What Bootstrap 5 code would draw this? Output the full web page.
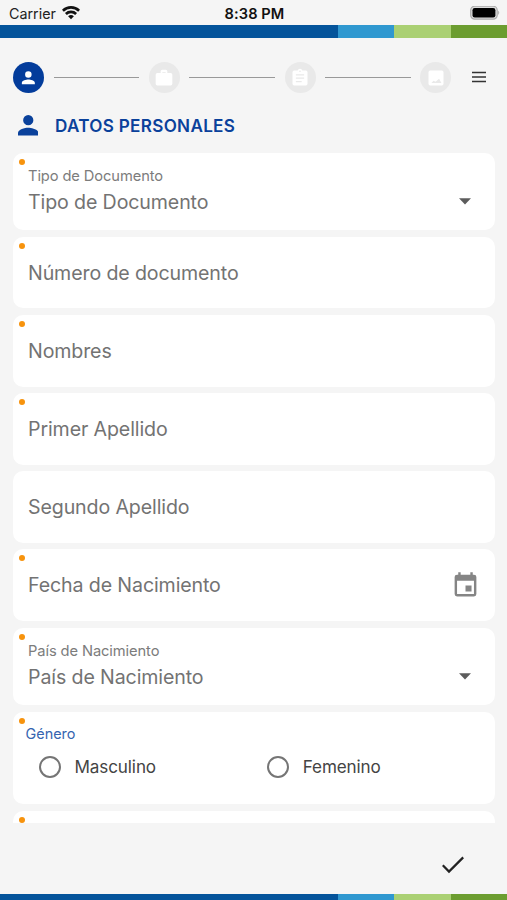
<!DOCTYPE html>
<html lang="es">
<head>
<meta charset="utf-8">
<meta name="viewport" content="width=device-width, initial-scale=1">
<title>Datos personales</title>
<link href="https://cdn.jsdelivr.net/npm/bootstrap@5.3.0/dist/css/bootstrap.min.css" rel="stylesheet">
<style>
body{font-family:Inter,"Liberation Sans",sans-serif;background:#f5f5f5;height:900px;line-height:1.2;color:#444}
svg{display:block;flex:none}
.status{height:25px;color:#222;font-size:14.3px;padding:3px 7px 0 9px}
.status>div{flex:1 1 0}
.status .clock{font-weight:600;font-size:14.6px;color:#111;letter-spacing:.1px;padding-top:1px}
.wifi{margin:0 0 2px 6px}
.stripe{height:13px;flex:none}
.stripe.low{height:6px}
.stripe i{width:56.3px}
.stripe i:first-child{width:auto;flex:1}
.s1{background:#04549b}.s2{background:#2f98d0}.s3{background:#aad073}.s4{background:#6c9d30}
.steps{padding:24px 19px 0 13px}
.step{width:31px;height:31px;background:#e9e9e9;color:#fff;flex:none}
.step.on{background:#033c9b}
.rail{height:1px;background:#999;flex:1;margin:0 9.5px}
.burger{margin:0 0 1px 18.5px}
.heading{color:#0a419b;padding:5px 17.5px 0;height:59.5px}
.heading h1{font-size:17.1px;font-weight:600;margin:1px 0 0 17px;letter-spacing:.31px}
.fields{padding:0 12.5px 0 13px;gap:6.5px;height:670.5px;overflow:hidden}
.field{background:#fff;border-radius:10px;height:71.7px;flex:none;padding:1.6px 15px 0;color:#737373;font-size:19.6px;letter-spacing:-.12px}
.field.tall{height:77.7px;padding-top:0;padding-bottom:2px}
.field.group{height:92.5px;padding:13px 12.5px}
.field small{font-size:14.7px;display:block;line-height:18px;color:#7c7c7c;letter-spacing:-.1px}
.field .val{line-height:24px;margin-top:5px}
.req::before{content:"";position:absolute;left:6.3px;top:6px;width:6px;height:6px;border-radius:50%;background:#f7930d}
.calendar{margin-bottom:2px}
.legend-label{color:#3564b0;font-size:14.4px;line-height:17px;letter-spacing:0}
.choices{margin-top:14px}
.choice{font-size:17.1px;color:#444;width:228.5px;letter-spacing:-.12px}
.ring{width:22px;height:22px;border:2.3px solid #757575;border-radius:50%;margin:0 14px 0 13px}
.actions{padding:12px 42px 0 0}
</style>
<script src="https://cdn.jsdelivr.net/npm/bootstrap@5.3.0/dist/js/bootstrap.bundle.min.js"></script>
</head>
<body class="d-flex flex-column overflow-hidden">
<header class="status d-flex align-items-center flex-shrink-0">
  <div class="d-flex align-items-center"><span>Carrier</span>
    <svg class="wifi" width="18" height="14" viewBox="0 0 18 14" fill="none" stroke="#111" stroke-width="2.7"><path d="M.9 4.700a11.600 11.600 0 0 1 16.200 0M3.900 8a7.300 7.300 0 0 1 10.200 0"/><path d="M9 13.200 6.100 10.300a4.200 4.200 0 0 1 5.800 0z" fill="#111" stroke="none"/></svg>
  </div>
  <span class="clock">8:38 PM</span>
  <div class="d-flex justify-content-end"><svg width="30" height="16" viewBox="0 1 30 16"><rect x=".7" y=".7" width="26.500" height="13" rx="4" fill="#ddd" stroke="#aaa" stroke-width="1.200" transform="translate(0 .5)"/><rect x="2.500" y="3" width="22.900" height="9.400" rx="2.200"/><path d="M28.200 5.500q2 2.200 0 4.400z" fill="#aaa"/></svg></div>
</header>
<div class="stripe d-flex"><i class="s1"></i><i class="s2"></i><i class="s3"></i><i class="s4"></i></div>
<nav class="steps d-flex align-items-center flex-shrink-0">
  <span class="step on rounded-circle d-flex align-items-center justify-content-center"><svg width="19.500" height="19.500" viewBox="0.500 0 24 24" fill="currentColor"><path d="M12 12a4 4 0 1 0 0-8 4 4 0 0 0 0 8zm0 2c-2.670 0-8 1.340-8 4v2h16v-2c0-2.660-5.330-4-8-4z"/></svg></span>
  <span class="rail"></span>
  <span class="step rounded-circle d-flex align-items-center justify-content-center"><svg width="20" height="20" viewBox="0 0 24 24" fill="currentColor"><path d="M20 6h-4V4a2 2 0 0 0-2-2h-4a2 2 0 0 0-2 2v2H4a2 2 0 0 0-2 2v11a2 2 0 0 0 2 2h16a2 2 0 0 0 2-2V8a2 2 0 0 0-2-2zm-6 0h-4V5h4z"/></svg></span>
  <span class="rail"></span>
  <span class="step rounded-circle d-flex align-items-center justify-content-center"><svg width="20" height="20" viewBox="0 0 24 24" fill="currentColor"><path d="M19 3h-4.180a3 3 0 0 0-5.640 0H5a2 2 0 0 0-2 2v14a2 2 0 0 0 2 2h14a2 2 0 0 0 2-2V5a2 2 0 0 0-2-2zm-7 0a1 1 0 1 1 0 2 1 1 0 0 1 0-2zm2 14H7v-1.500h7zm3-4H7v-1.500h10zm0-4H7V7.500h10z"/></svg></span>
  <span class="rail"></span>
  <span class="step rounded-circle d-flex align-items-center justify-content-center"><svg width="20" height="20" viewBox="0 0 24 24" fill="currentColor"><path d="M21 19V5a2 2 0 0 0-2-2H5a2 2 0 0 0-2 2v14a2 2 0 0 0 2 2h14a2 2 0 0 0 2-2zM6.500 18l2.500-2.600 2.500 1.200 4.200-3.600 2.800 5z"/></svg></span>
  <svg class="burger" width="18" height="12" viewBox="0 0 18 12" stroke="#333" stroke-width="1.600"><path d="M2 1.500h14M2 6h14M2 10.500h14"/></svg>
</nav>
<div class="heading d-flex align-items-center flex-shrink-0"><svg width="20.500" height="20.500" viewBox="4 4 16 16" fill="currentColor"><path d="M12 12a4 4 0 1 0 0-8 4 4 0 0 0 0 8zm0 2c-2.670 0-8 1.340-8 4v2h16v-2c0-2.660-5.330-4-8-4z"/></svg><h1>DATOS PERSONALES</h1></div>
<main class="fields d-flex flex-column flex-shrink-0">
  <div class="field tall req position-relative d-flex align-items-center"><div class="flex-fill"><small>Tipo de Documento</small><div class="val d-flex justify-content-between align-items-center"><span>Tipo de Documento</span><svg class="me-2" width="12.500" height="7" viewBox="0 0 12.500 7" fill="#5c5c5c"><path d="M0 .3h12L6 6.500z"/></svg></div></div></div>
  <div class="field req position-relative d-flex align-items-center">Número de documento</div>
  <div class="field req position-relative d-flex align-items-center">Nombres</div>
  <div class="field req position-relative d-flex align-items-center">Primer Apellido</div>
  <div class="field d-flex align-items-center">Segundo Apellido</div>
  <div class="field req position-relative d-flex align-items-center justify-content-between">Fecha de Nacimiento
    <svg class="calendar" width="29" height="29" viewBox="0 0 24 24" fill="#858585"><path d="M17 12h-5v5h5zM16 1v2H8V1H6v2H5a2 2 0 0 0-2 2v14a2 2 0 0 0 2 2h14a2 2 0 0 0 2-2V5a2 2 0 0 0-2-2h-1V1zm3 18H5V8h14z"/></svg></div>
  <div class="field tall req position-relative d-flex align-items-center"><div class="flex-fill"><small>País de Nacimiento</small><div class="val d-flex justify-content-between align-items-center"><span>País de Nacimiento</span><svg class="me-2" width="12.500" height="7" viewBox="0 0 12.500 7" fill="#5c5c5c"><path d="M0 .3h12L6 6.500z"/></svg></div></div></div>
  <div class="field group req position-relative"><div class="legend-label">Género</div>
    <div class="choices d-flex"><div class="choice d-flex align-items-center"><span class="ring"></span>Masculino</div><div class="choice d-flex align-items-center"><span class="ring"></span>Femenino</div></div></div>
  <div class="field req position-relative"></div>
</main>
<footer class="actions d-flex flex-fill justify-content-end align-items-center"><svg width="24" height="18" viewBox="0 0 24 18" fill="none" stroke="#222" stroke-width="2.200"><path d="M1.800 9.200 8 15.600 22.200 1.400"/></svg></footer>
<div class="stripe low d-flex"><i class="s1"></i><i class="s2"></i><i class="s3"></i><i class="s4"></i></div>
</body>
</html>
